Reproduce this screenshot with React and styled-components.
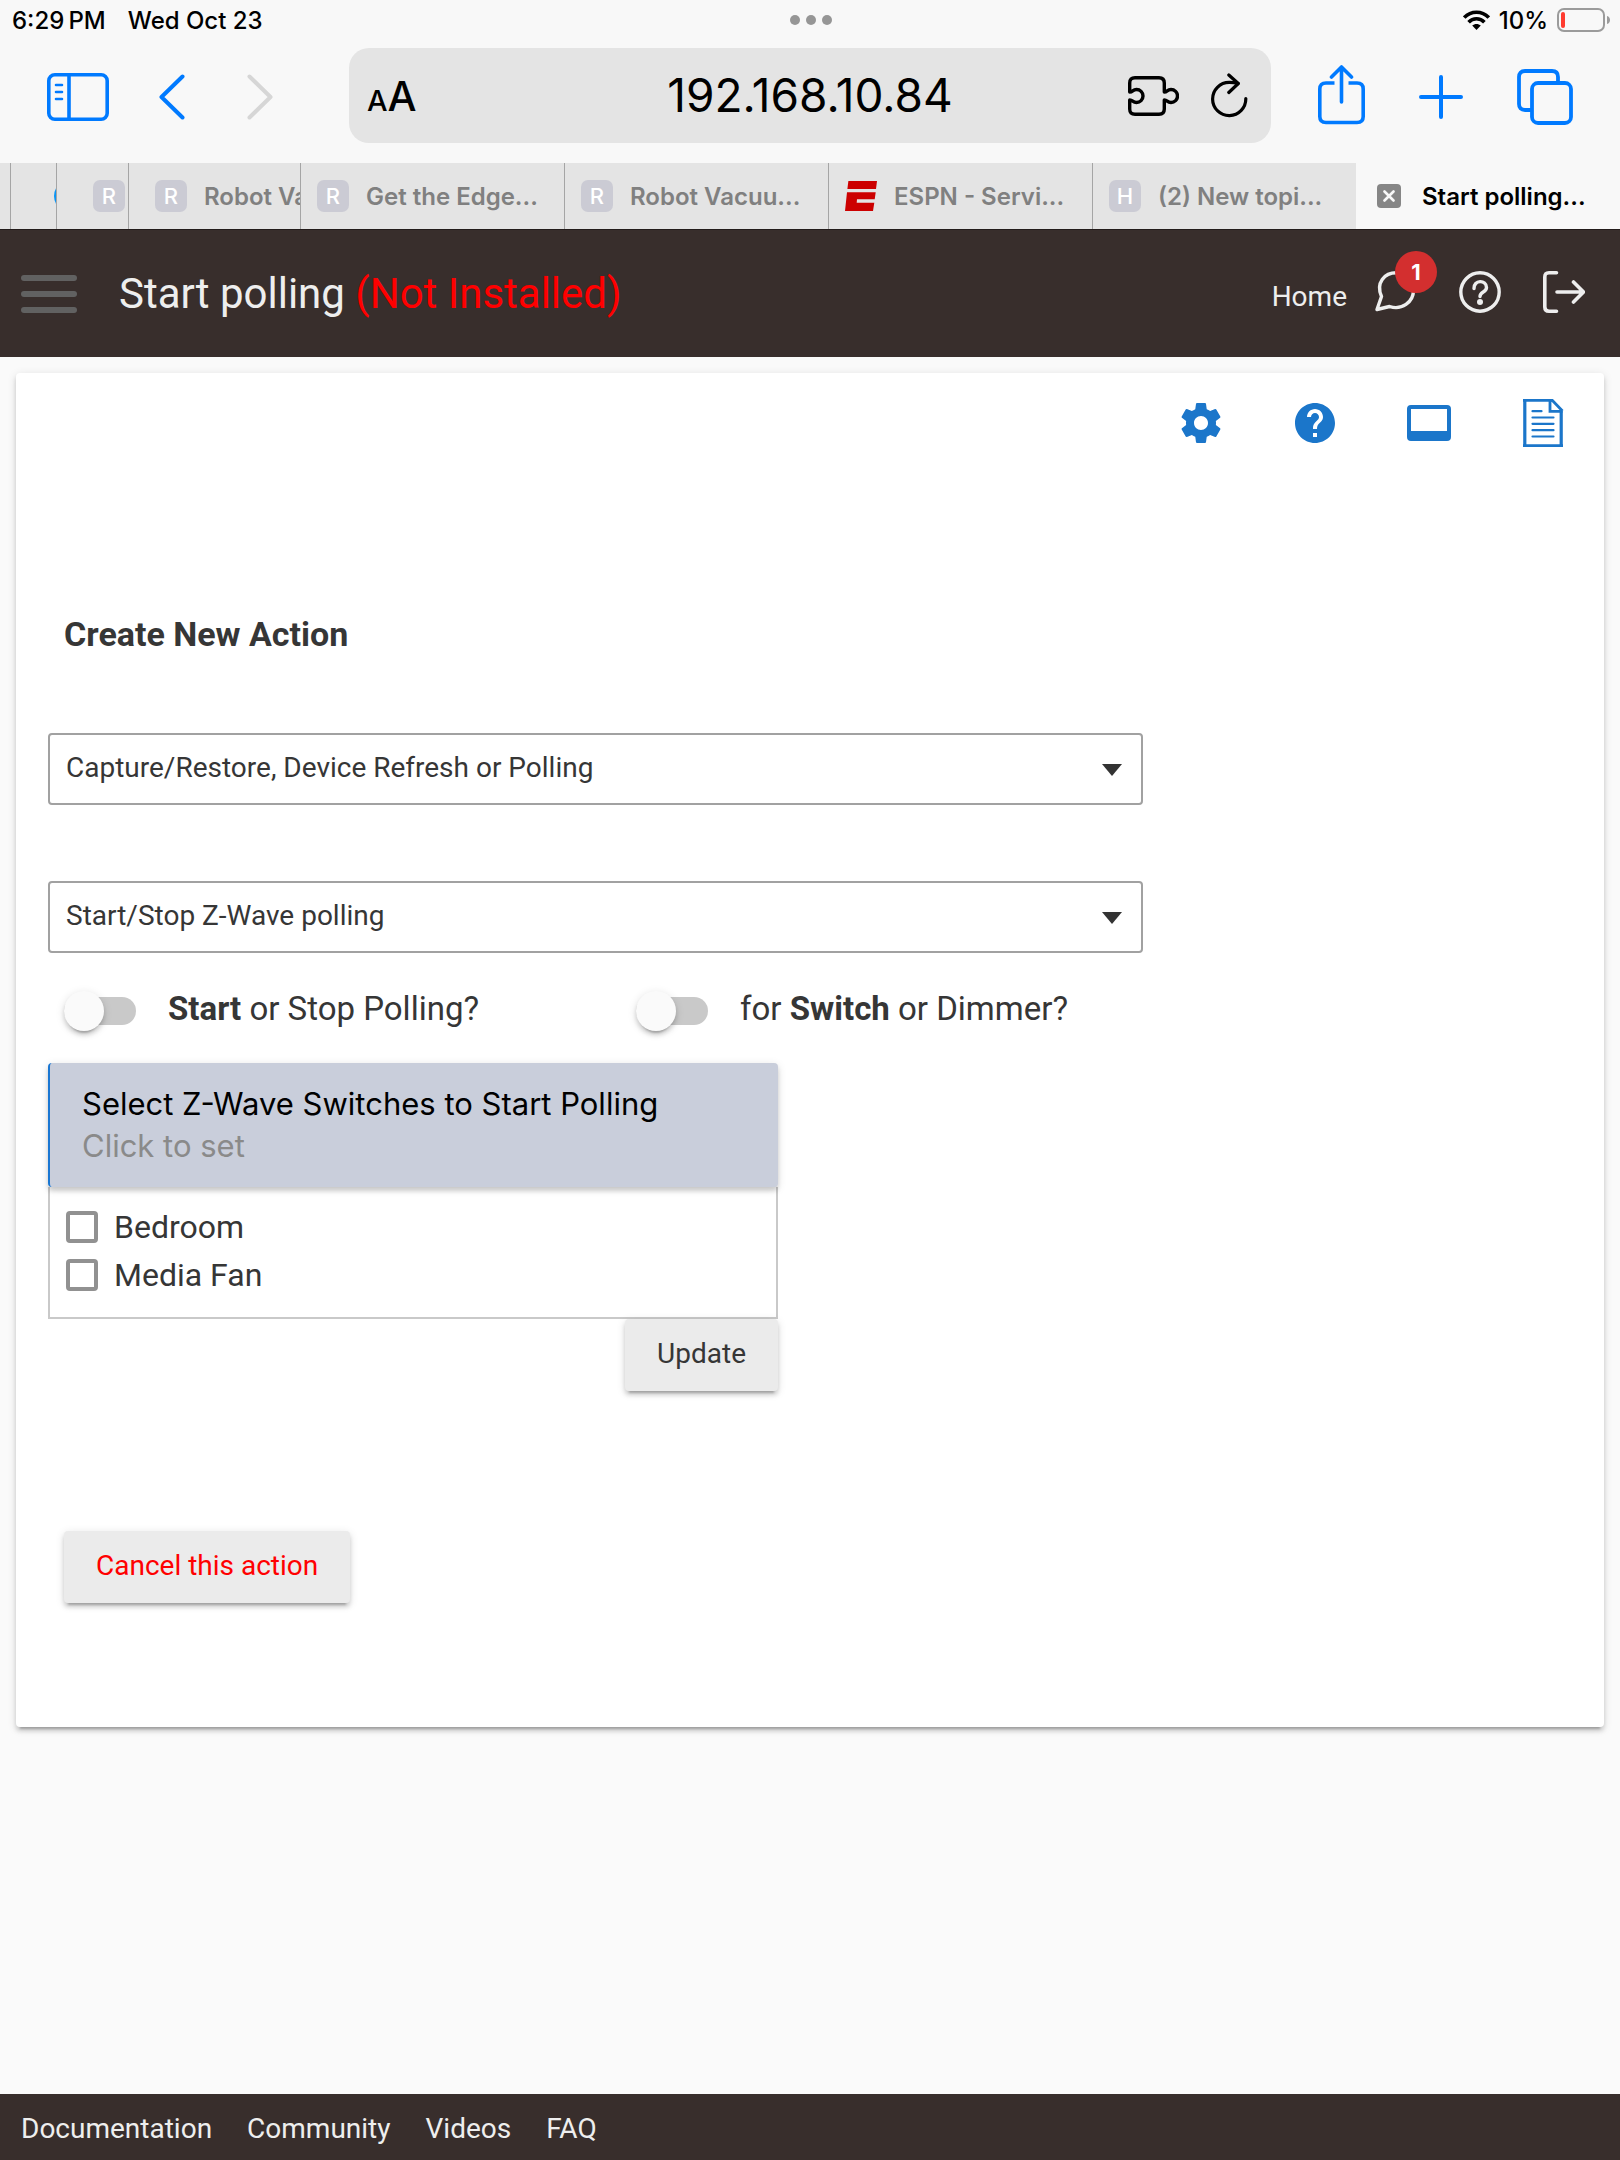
import { useState } from 'react';
import styled, { createGlobalStyle } from 'styled-components';
import { MdHelp } from 'react-icons/md';

const stackedTabs = [
  { id: 1, width: 10 },
  { id: 2, width: 46, inset: 43, dot: true },
  { id: 3, width: 72, inset: 36, letter: 'R' },
  { id: 4, width: 172, inset: 26, letter: 'R', title: 'Robot Va' },
];

const openTabs = [
  { id: 5, letter: 'R', title: 'Get the Edge...' },
  { id: 6, letter: 'R', title: 'Robot Vacuu...' },
  { id: 7, espn: true, title: 'ESPN - Servi...' },
  { id: 8, letter: 'H', title: '(2) New topi...' },
];

const footerLinks = ['Documentation', 'Community', 'Videos', 'FAQ'];

const StatusBar = () => (
  <StatusWrapper>
    <StatusGroup>
      <span>6:29&thinsp;PM</span>
      <span>Wed Oct 23</span>
    </StatusGroup>
    <Dots>
      <Dot />
      <Dot />
      <Dot />
    </Dots>
    <StatusGroup $end>
      <svg width="27" height="20" viewBox="0 0 27 20" fill="none" stroke="#000" strokeWidth="3.6">
        <path d="M1.2 7.6C8 .4 19 .4 25.8 7.6" />
        <path d="M5.6 12.2C10 7.6 17 7.6 21.4 12.2" />
        <path d="M13.5 20 9.2 15.6C11.6 13.4 15.4 13.4 17.8 15.6Z" fill="#000" stroke="none" />
      </svg>
      <span>10%</span>
      <svg width="53" height="24" viewBox="0 0 53 24">
        <rect x="1" y="1" width="46" height="22" rx="6" fill="none" stroke="#9b9b9b" strokeWidth="2" />
        <rect x="4" y="4" width="4" height="16" rx="2" fill="#ff3b30" />
        <path d="M50 8c4 1 4 7 0 8z" fill="#9b9b9b" />
      </svg>
    </StatusGroup>
  </StatusWrapper>
);

const BrowserToolbar = () => {
  const [address, setAddress] = useState('192.168.10.84');

  return (
    <ToolbarWrapper>
      <ToolButtons $gap={50}>
        <IconButton aria-label="Sidebar">
          <svg width="62" height="51" viewBox="0 -3 62 51" fill="none" stroke="#007aff" strokeWidth="3.6">
            <rect x="1.8" y="1.8" width="58.4" height="44.4" rx="6" />
            <path d="M22 2v44" />
            <path d="M9 12h6M9 19h6M9 26h6" strokeWidth="2.6" strokeLinecap="round" />
          </svg>
        </IconButton>
        <ArrowButton aria-label="Back">
          <svg width="26" height="48" viewBox="0 -2 26 48" fill="none" stroke="#007aff" strokeWidth="4" strokeLinecap="round" strokeLinejoin="round">
            <path d="M23.5 2.5 2.5 23l21 20.5" />
          </svg>
        </ArrowButton>
        <ArrowButton aria-label="Forward">
          <svg width="26" height="48" viewBox="0 -2 26 48" fill="none" stroke="#d6d6d6" strokeWidth="4" strokeLinecap="round" strokeLinejoin="round">
            <path d="m2.5 2.5 21 20.5-21 20.5" />
          </svg>
        </ArrowButton>
      </ToolButtons>
      <AddressBar>
        <FormatButton aria-label="Page settings">
          <SmallLetter>A</SmallLetter>A
        </FormatButton>
        <AddressInput
          aria-label="Address"
          value={address}
          onChange={e => setAddress(e.target.value)}
        />
        <AddressActions>
          <IconButton aria-label="Extensions">
            <svg width="51" height="40" viewBox="0 0 51 40" fill="none" stroke="#000" strokeWidth="3.4" strokeLinejoin="round">
              <path d="M1.7 16V7Q1.7 1.7 7 1.7H31Q36.3 1.7 36.3 7V16C39.5 16 39 13.5 43 13.5a6.5 6.5 0 0 1 0 13C39 26.5 39.5 24 36.3 24V33Q36.3 38.3 31 38.3H7Q1.7 38.3 1.7 33V24C5 24 4.5 26.5 8.5 26.5a6.5 6.5 0 0 0 0-13C4.5 13.5 5 16 1.7 16Z" />
            </svg>
          </IconButton>
          <IconButton aria-label="Reload">
            <svg width="37" height="45" viewBox="0 0 37 45" fill="none" stroke="#000" strokeWidth="3.2" strokeLinecap="round" strokeLinejoin="round">
              <path d="M34.8 25.5A16.6 16.6 0 1 1 18.2 9.4Q23 9.4 27 10.5" />
              <path d="m17.8 2 9.5 8.5-9.5 9" />
            </svg>
          </IconButton>
        </AddressActions>
      </AddressBar>
      <ToolButtons $gap={54}>
        <IconButton aria-label="Share">
          <svg width="47" height="62" viewBox="0 0 47 62" fill="none" stroke="#007aff" strokeWidth="3.6" strokeLinejoin="round">
            <path d="M16.5 18H8Q1.8 18 1.8 24V51.5Q1.8 57.5 8 57.5H39Q45.2 57.5 45.2 51.5V24Q45.2 18 39 18H30.5" />
            <path d="M23.5 2.5V37M13.5 12 23.5 2l10 10" strokeLinecap="round" />
          </svg>
        </IconButton>
        <IconButton aria-label="New tab">
          <svg width="44" height="46" viewBox="0 -2 44 46" fill="none" stroke="#007aff" strokeWidth="4" strokeLinecap="round">
            <path d="M22 2v40M2 22h40" />
          </svg>
        </IconButton>
        <IconButton aria-label="Tabs">
          <svg width="56" height="58" viewBox="0 -2 56 58" fill="none" stroke="#007aff" strokeWidth="3.8">
            <rect x="15" y="14" width="39" height="40" rx="6" />
            <path d="M14 41H8Q2 41 2 35V8Q2 2 8 2H35Q41 2 41 8V13" />
          </svg>
        </IconButton>
      </ToolButtons>
    </ToolbarWrapper>
  );
};

const EspnLogo = () => (
  <svg width="32" height="30" viewBox="0 0 32 30" fill="#cc0000">
    <path d="M3.4 0H32L31 8H2.4Z" />
    <path d="M2 11.2H30.7L29.7 18.3H12L11.7 21.7H29.3L28 30H0Z" />
  </svg>
);

const TabStrip = () => (
  <TabsWrapper>
    {stackedTabs.map((tab, idx) => (
      <Tab key={tab.id} $width={tab.width} $inset={tab.inset} $first={idx === 0}>
        {tab.dot && <RoundFavicon />}
        {tab.letter && <Favicon>{tab.letter}</Favicon>}
        {tab.title && <TabTitle>{tab.title}</TabTitle>}
      </Tab>
    ))}
    {openTabs.map(tab => (
      <Tab key={tab.id} $inset={16}>
        {tab.espn ? <EspnLogo /> : <Favicon>{tab.letter}</Favicon>}
        <TabTitle>{tab.title}</TabTitle>
      </Tab>
    ))}
    <Tab $inset={16} $active>
      <CloseButton aria-label="Close tab">
        <svg width="12" height="12" viewBox="0 0 12 12" stroke="#f8f8f8" strokeWidth="2.6" strokeLinecap="round">
          <path d="m1.5 1.5 9 9M10.5 1.5l-9 9" />
        </svg>
      </CloseButton>
      <TabTitle $active>Start polling...</TabTitle>
    </Tab>
  </TabsWrapper>
);

const AppHeader = () => (
  <HeaderWrapper>
    <MenuButton aria-label="Menu">
      <MenuBar />
      <MenuBar />
      <MenuBar />
    </MenuButton>
    <PageTitle>
      Start polling <NotInstalled>(Not Installed)</NotInstalled>
    </PageTitle>
    <HeaderNav>
      <HomeLink href="#home">Home</HomeLink>
      <NavButton aria-label="Notifications">
        <svg width="42" height="42" viewBox="0 0 42 42" fill="none" stroke="#eee" strokeWidth="3.4" strokeLinejoin="round">
          <path d="M6.5 25.5C.5 11.5 9.500 1.800 21.500 1.800C31.500 1.800 38.500 9.500 38.500 19C38.500 31.500 26.500 39.500 14.500 35.500L2 38.500Z" />
        </svg>
        <Badge>1</Badge>
      </NavButton>
      <NavButton aria-label="Help">
        <svg width="42" height="42" viewBox="0 0 42 42" fill="none" stroke="#eee" strokeWidth="3.4" strokeLinecap="round">
          <circle cx="21" cy="21" r="19.2" />
          <path d="M15 17.5C14.5 8.5 27.5 8.5 27.5 16.5C27.5 21.5 21 20.5 21 25.5" />
          <circle cx="21" cy="31" r="3" fill="#eee" stroke="none" />
        </svg>
      </NavButton>
      <NavButton aria-label="Log out">
        <svg width="42" height="42" viewBox="0 0 42 42" fill="none" stroke="#eee" strokeWidth="3.6" strokeLinecap="round" strokeLinejoin="round">
          <path d="M13.5 1.8H6Q1.8 1.8 1.8 6V36Q1.8 40.2 6 40.2H13.5" />
          <path d="M14 21H40M30.5 11 40.5 21l-10 10" />
        </svg>
      </NavButton>
    </HeaderNav>
  </HeaderWrapper>
);

const CardTools = () => (
  <ToolsRow>
    <ToolLink href="#settings" aria-label="Settings">
      <svg width="48" height="48" viewBox="0 0 24 24" fill="currentColor">
        <path d="M19.43 12.98c.04-.32.07-.64.07-.98s-.03-.66-.07-.98l2.11-1.65c.19-.15.24-.42.12-.64l-2-3.46c-.12-.22-.39-.3-.61-.22l-2.49 1c-.52-.4-1.08-.73-1.69-.98l-.38-2.65C14.46 2.18 14.25 2 14 2h-4c-.25 0-.46.18-.49.42l-.38 2.65c-.61.25-1.17.59-1.69.98l-2.49-1c-.23-.09-.49 0-.61.22l-2 3.46c-.13.22-.07.49.12.64l2.11 1.65c-.04.32-.07.65-.07.98s.03.66.07.98l-2.11 1.65c-.19.15-.24.42-.12.64l2 3.46c.12.22.39.3.61.22l2.49-1c.52.4 1.08.73 1.69.98l.38 2.65c.03.24.24.42.49.42h4c.25 0 .46-.18.49-.42l.38-2.65c.61-.25 1.17-.59 1.69-.98l2.49 1c.23.09.49 0 .61-.22l2-3.46c.12-.22.07-.49-.12-.64l-2.11-1.65zM12 15.5c-1.93 0-3.5-1.57-3.5-3.5s1.57-3.5 3.5-3.5 3.5 1.57 3.5 3.5-1.57 3.5-3.5 3.5z" />
      </svg>
    </ToolLink>
    <ToolLink href="#help" aria-label="Help">
      <MdHelp size={48} />
    </ToolLink>
    <ToolLink href="#display" aria-label="Display">
      <svg width="48" height="48" viewBox="0 0 24 24" fill="currentColor" fillRule="evenodd">
        <path d="M3 3H21Q23 3 23 5V19Q23 21 21 21H3Q1 21 1 19V5Q1 3 3 3ZM3 5V16H21V5Z" />
      </svg>
    </ToolLink>
    <ToolLink href="#logs" aria-label="Logs">
      <svg width="48" height="48" viewBox="0 0 48 48" fill="none" stroke="currentColor">
        <path d="M5.8 0V48M4 46.8H44M42.2 48V12M4 1.2H33" strokeWidth="3.2" />
        <path d="M31 1V12.3H43.5M32 0 43.5 12" strokeWidth="2.8" />
        <path d="M13.5 12.2H22.5M13.5 18.5H34.5M13.5 24.8H34.5M13.5 31.2H34.5M13.5 37.5H34.5" strokeWidth="2.2" strokeLinecap="round" />
      </svg>
    </ToolLink>
  </ToolsRow>
);

const Dropdown = ({ label, value }) => (
  <SelectWrapper>
    <Select aria-label={label} defaultValue={value}>
      <option>{value}</option>
    </Select>
    <SelectArrow width="22" height="13" viewBox="0 0 22 13" fill="#333">
      <path d="M1 1H21L11 13Z" />
    </SelectArrow>
  </SelectWrapper>
);

const App = () => {
  const [stopPolling, setStopPolling] = useState(false);
  const [dimmer, setDimmer] = useState(false);

  return (
    <PageWrapper>
      <GlobalStyle />
      <StatusBar />
      <BrowserToolbar />
      <TabStrip />
      <AppHeader />
      <Card>
        <CardTools />
        <Heading>Create New Action</Heading>
        <SelectGroup>
          <Dropdown
            label="Action type"
            value="Capture/Restore, Device Refresh or Polling"
          />
          <Dropdown label="Action" value="Start/Stop Z-Wave polling" />
        </SelectGroup>
        <ToggleRow>
          <ToggleLabel>
            <Toggle
              type="checkbox"
              checked={stopPolling}
              onChange={e => setStopPolling(e.target.checked)}
            />
            <span>
              <b>Start</b> or Stop Polling?
            </span>
          </ToggleLabel>
          <ToggleLabel>
            <Toggle
              type="checkbox"
              checked={dimmer}
              onChange={e => setDimmer(e.target.checked)}
            />
            <span>
              for <b>Switch</b> or Dimmer?
            </span>
          </ToggleLabel>
        </ToggleRow>
        <DevicePicker>
          <PickerButton>
            Select Z-Wave Switches to Start Polling
            <PickerHint>Click to set</PickerHint>
          </PickerButton>
          <DeviceList>
            {['Bedroom', 'Media Fan'].map(name => (
              <DeviceLabel key={name}>
                <CheckBox type="checkbox" />
                {name}
              </DeviceLabel>
            ))}
          </DeviceList>
          <ActionButton>Update</ActionButton>
        </DevicePicker>
        <CancelRow>
          <ActionButton $danger>Cancel this action</ActionButton>
        </CancelRow>
      </Card>
      <Footer>
        {footerLinks.map(link => (
          <FooterLink key={link} href={`#${link.toLowerCase()}`}>
            {link}
          </FooterLink>
        ))}
      </Footer>
    </PageWrapper>
  );
};

export default App;

const GlobalStyle = createGlobalStyle`
  * {
    box-sizing: border-box;
  }

  body {
    margin: 0;
    background-color: #fafafa;
    color: #363636;
    font-family: Roboto, sans-serif;
  }

  button, input, select {
    margin: 0;
    font-family: inherit;
    color: inherit;
  }

  svg {
    display: block;
    flex-shrink: 0;
  }
`;

const PageWrapper = styled.div`
  display: flex;
  flex-direction: column;
  min-height: 100vh;
`;

const StatusWrapper = styled.div`
  display: grid;
  grid-template-columns: 1fr auto 1fr;
  align-items: center;
  height: 40px;
  padding: 0 10px 0 12px;
  background-color: #f8f8f8;
  color: #000;
  font-family: Inter, sans-serif;
  font-size: 24px;
  font-weight: 500;
`;

const StatusGroup = styled.div`
  display: flex;
  align-items: center;
  justify-content: ${props => (props.$end ? 'flex-end' : 'flex-start')};
  gap: ${props => (props.$end ? '9px' : '22px')};
`;

const Dots = styled.div`
  display: flex;
  gap: 6px;
`;

const Dot = styled.span`
  width: 10px;
  height: 10px;
  border-radius: 50%;
  background-color: #969696;
`;

const ToolbarWrapper = styled.div`
  display: flex;
  align-items: center;
  gap: 47px;
  padding: 8px 47px 20px;
  background-color: #f8f8f8;
  font-family: Inter, sans-serif;
`;

const ToolButtons = styled.div`
  display: flex;
  align-items: center;
  gap: ${props => props.$gap}px;
`;

const IconButton = styled.button`
  padding: 0;
  border: none;
  background: none;
`;

const ArrowButton = styled(IconButton)`
  & + & {
    margin-left: 12px;
  }
`;

const AddressBar = styled.div`
  display: grid;
  grid-template-columns: 1fr 2fr 1fr;
  align-items: center;
  flex: 1;
  height: 95px;
  margin-left: 29px;
  padding: 0 23px 0 18px;
  border-radius: 20px;
  background-color: #e4e4e4;
  color: #000;
`;

const FormatButton = styled(IconButton)`
  justify-self: start;
  font-size: 41px;
  font-weight: 500;
`;

const SmallLetter = styled.span`
  font-size: 29px;
`;

const AddressInput = styled.input`
  width: 100%;
  padding: 0 0 2px 5px;
  border: none;
  background: none;
  font-size: 46px;
  text-align: center;
  outline: none;
`;

const AddressActions = styled.div`
  display: flex;
  align-items: center;
  justify-content: flex-end;
  gap: 32px;
`;

const TabsWrapper = styled.div`
  display: flex;
  height: 66px;
  background-color: #e4e4e4;
  font-family: Inter, sans-serif;
`;

const Tab = styled.div`
  display: flex;
  align-items: center;
  gap: 17px;
  flex: ${props => (props.$width ? `0 0 ${props.$width}px` : '1 1 0')};
  min-width: 0;
  padding-left: ${props => props.$inset || 0}px;
  border-left: ${props => (props.$first ? 'none' : '1px solid #a5a5a5')};
  border-left-color: ${props => props.$active && '#f8f8f8'};
  background-color: ${props => (props.$active ? '#f8f8f8' : 'transparent')};
  overflow: hidden;
`;

const Favicon = styled.span`
  display: flex;
  align-items: center;
  justify-content: center;
  flex-shrink: 0;
  width: 32px;
  height: 32px;
  border-radius: 7px;
  background-color: #cbcbd4;
  color: white;
  font-size: 22px;
  font-weight: 500;
`;

const RoundFavicon = styled.span`
  flex-shrink: 0;
  width: 32px;
  height: 32px;
  border-radius: 50%;
  background-color: #0a95f5;
`;

const TabTitle = styled.button`
  min-width: 0;
  padding: 1px 0 0;
  border: none;
  background: none;
  color: ${props => (props.$active ? '#000' : '#808080')};
  font-size: 24px;
  font-weight: 600;
  white-space: nowrap;
  overflow: hidden;
`;

const CloseButton = styled.button`
  display: flex;
  align-items: center;
  justify-content: center;
  flex-shrink: 0;
  width: 24px;
  height: 24px;
  margin: 0 4px;
  padding: 0;
  border: none;
  border-radius: 4px;
  background-color: #868686;
`;

const HeaderWrapper = styled.header`
  display: flex;
  align-items: center;
  height: 128px;
  padding: 0 35px 0 21px;
  border-top: 1px solid #231c1b;
  background-color: #382e2c;
  color: #eee;
`;

const MenuButton = styled.button`
  display: flex;
  flex-direction: column;
  gap: 10px;
  padding: 0;
  border: none;
  background: none;
`;

const MenuBar = styled.span`
  width: 56px;
  height: 6px;
  border-radius: 3px;
  background-color: #616161;
`;

const PageTitle = styled.h1`
  margin: 0 0 0 42px;
  font-size: 42px;
  font-weight: 400;
`;

const NotInstalled = styled.span`
  color: red;
`;

const HeaderNav = styled.nav`
  display: flex;
  align-items: center;
  gap: 42px;
  margin-left: auto;
  padding-bottom: 4px;
`;

const HomeLink = styled.a`
  margin-right: -14px;
  padding-top: 10px;
  color: #eee;
  font-size: 28px;
  text-decoration: none;
`;

const NavButton = styled.button`
  position: relative;
  padding: 0;
  border: none;
  background: none;
`;

const Badge = styled.span`
  position: absolute;
  top: -20px;
  left: 20px;
  width: 42px;
  border-radius: 50%;
  background-color: #d32f2f;
  color: white;
  font-family: Inter, sans-serif;
  font-size: 22px;
  font-weight: 700;
  line-height: 42px;
  text-align: center;
`;

const Card = styled.main`
  margin: 16px;
  padding: 26px 32px 124px;
  border-radius: 4px;
  background-color: white;
  box-shadow:
    0 4px 4px 0 rgba(0, 0, 0, 0.14),
    0 6px 2px -4px rgba(0, 0, 0, 0.2),
    0 2px 10px 0 rgba(0, 0, 0, 0.12);
`;

const ToolsRow = styled.div`
  display: flex;
  justify-content: flex-end;
  gap: 66px;
  padding-right: 5px;
`;

const ToolLink = styled.a`
  color: #1b76ca;
`;

const Heading = styled.h2`
  margin: 167px 16px 79px;
  font-size: 34px;
  font-weight: 700;
  line-height: 40px;
`;

const SelectGroup = styled.div`
  display: flex;
  flex-direction: column;
  gap: 76px;
  max-width: 1095px;
`;

const SelectWrapper = styled.div`
  display: grid;
  align-items: center;
`;

const Select = styled.select`
  grid-area: 1 / 1;
  appearance: none;
  width: 100%;
  height: 72px;
  padding: 0 48px 4px 16px;
  border: 2px solid #a1a1a1;
  border-radius: 4px;
  background-color: white;
  font-size: 28px;
`;

const SelectArrow = styled.svg`
  grid-area: 1 / 1;
  justify-self: end;
  margin-right: 20px;
  pointer-events: none;
`;

const ToggleRow = styled.div`
  display: grid;
  grid-template-columns: repeat(auto-fill, 572px);
  margin: 38px 0 32px 16px;
`;

const ToggleLabel = styled.label`
  display: flex;
  align-items: center;
  gap: 32px;
  height: 40px;
  font-size: 33px;

  span {
    padding-bottom: 6px;
  }
`;

const Toggle = styled.input`
  appearance: none;
  position: relative;
  width: 72px;
  height: 28px;
  border-radius: 14px;
  background-color: #c9c9c9;

  &::before {
    content: '';
    position: absolute;
    top: -6px;
    left: ${props => (props.checked ? '32px' : '0')};
    width: 40px;
    height: 40px;
    border-radius: 50%;
    background-color: #fafafa;
    box-shadow:
      0 4px 4px 0 rgba(0, 0, 0, 0.14),
      0 6px 2px -4px rgba(0, 0, 0, 0.2),
      0 2px 10px 0 rgba(0, 0, 0, 0.12);
  }
`;

const DevicePicker = styled.section`
  display: flex;
  flex-direction: column;
  align-items: flex-end;
  max-width: 730px;
`;

const PickerButton = styled.button`
  position: relative;
  width: 100%;
  height: 124px;
  padding: 0 32px;
  border: none;
  border-left: 2px solid #1976d2;
  border-radius: 4px;
  background-color: #c9cedb;
  box-shadow:
    0 4px 4px 0 rgba(0, 0, 0, 0.14),
    0 2px 10px 0 rgba(0, 0, 0, 0.12);
  color: #000;
  font-family: Inter, sans-serif;
  font-size: 31px;
  line-height: 42px;
  text-align: left;
`;

const PickerHint = styled.span`
  display: block;
  color: #8a8a8a;
`;

const DeviceList = styled.div`
  display: flex;
  flex-direction: column;
  gap: 16px;
  width: 100%;
  padding: 24px 16px 26px;
  border: 2px solid #c9c9c9;
  border-top: none;
`;

const DeviceLabel = styled.label`
  display: flex;
  align-items: center;
  gap: 16px;
  font-size: 32px;
  line-height: 32px;
`;

const CheckBox = styled.input`
  appearance: none;
  width: 32px;
  height: 32px;
  border: 4px solid #919191;
  border-radius: 4px;

  &:checked {
    background-color: #1976d2;
  }
`;

const ActionButton = styled.button`
  height: 72px;
  padding: 0 32px 4px;
  border: none;
  border-radius: 4px;
  background-color: #ebebeb;
  box-shadow:
    0 4px 4px 0 rgba(0, 0, 0, 0.14),
    0 6px 2px -4px rgba(0, 0, 0, 0.2),
    0 2px 10px 0 rgba(0, 0, 0, 0.12);
  color: ${props => (props.$danger ? 'red' : '#363636')};
  font-size: 28px;
`;

const CancelRow = styled.div`
  margin: 140px 16px 0;
`;

const Footer = styled.footer`
  display: flex;
  align-items: center;
  gap: 35px;
  height: 66px;
  margin-top: auto;
  padding: 2px 21px 0;
  background-color: #382e2c;
`;

const FooterLink = styled.a`
  color: #eee;
  font-size: 28px;
  text-decoration: none;
`;
